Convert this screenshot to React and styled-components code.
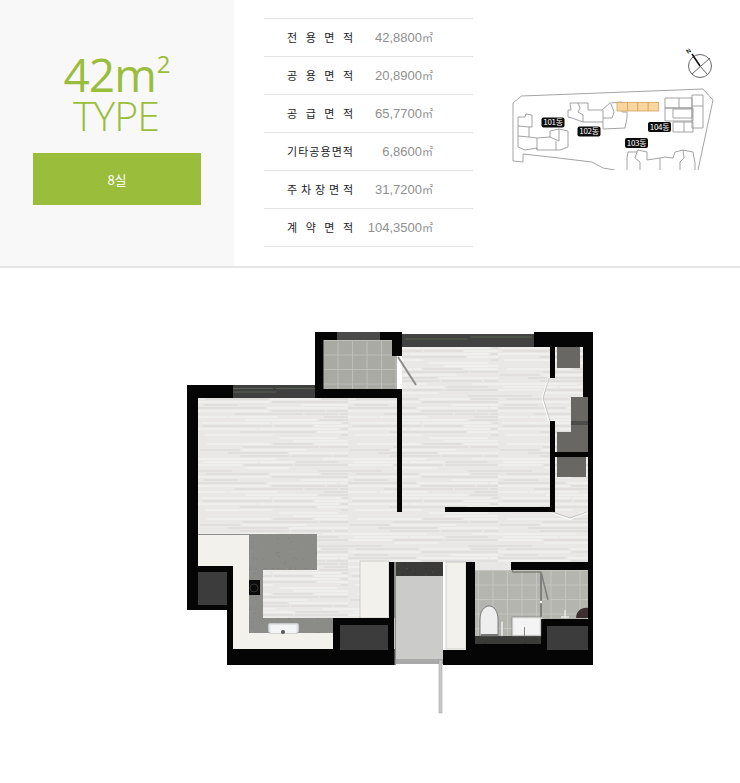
import styled, { createGlobalStyle } from 'styled-components'

const Global = createGlobalStyle`
    body{
        margin: 0;
        background: #fff;
        font-family: "Noto Sans CJK KR", "Noto Sans", sans-serif;
    }
`

const Page = styled.div`
    width: 740px;
    height: 783px;
    overflow: hidden;
`
const Header = styled.header`
    display: flex;
    height: 266px;
    border-bottom: 2px solid #e5e5e5;
`
const TypePanel = styled.div`
    width: 234px;
    box-sizing: border-box;
    padding-top: 52px;
    background-color: #f8f8f8;
    display: flex;
    flex-direction: column;
    align-items: center;
    color: #9bbd3c;
    font-family: "Open Sans", sans-serif;
`
const Size = styled.h1`
    margin: 0 0 0 -1px;
    font-size: 46px;
    line-height: 44px;
    font-weight: 400;
    letter-spacing: -1px;
    sup{
        font-size: 24px;
        font-weight: 500;
        line-height: 0;
        margin-left: 1px;
        vertical-align: 19px;
    }
`
const TypeName = styled.p`
    margin: -1px 0 0 -2px;
    font-size: 41px;
    line-height: 40px;
    font-weight: 300;
    letter-spacing: -1px;
`
const RoomBadge = styled.div`
    width: 168px;
    height: 52px;
    margin: 18px 0 0;
    background-color: #9bbd3c;
    color: #fff;
    font-family: "Noto Sans CJK KR", sans-serif;
    font-size: 13px;
    display: flex;
    align-items: center;
    justify-content: center;
`
const SpecTable = styled.div`
    width: 209px;
    margin: 18px 0 0 30px;
    align-self: flex-start;
    border-top: 1px solid #e3e3e3;
`
const SpecRow = styled.div`
    height: 37px;
    box-sizing: content-box;
    border-bottom: 1px solid #e3e3e3;
    display: flex;
    align-items: center;
    padding-left: 23px;
`
const SpecLabel = styled.div`
    width: 66px;
    padding-bottom: 2px;
    display: flex;
    justify-content: space-between;
    color: #222;
    font-size: 11px;
    line-height: 14px;
`
const SpecValue = styled.div`
    width: 80px;
    text-align: right;
    color: #8f8f8f;
    font-family: "Liberation Sans", sans-serif;
    font-size: 13px;
    line-height: 14px;
    white-space: nowrap;
    span{
        font-family: "Noto Sans CJK KR", sans-serif;
        font-size: 11px;
    }
`
const SiteMap = styled.svg`
    display: block;
    width: 210px;
    height: 125px;
    margin: 45px 0 0 37px;
    flex: none;
`
const PlanArea = styled.main`
    padding: 57px 0 63px 180px;
`
const Plan = styled.svg`
    display: block;
    width: 420px;
    height: 395px;
`

const specs = [
    ['전용면적', '42,8800'],
    ['공용면적', '20,8900'],
    ['공급면적', '65,7700'],
    ['기타공용면적', '6,8600'],
    ['주차장면적', '31,7200'],
    ['계약면적', '104,3500'],
]

const tags = [
    ['101동', 541.5, 117.5],
    ['102동', 577.5, 126.5],
    ['104동', 648, 122],
    ['103동', 625, 138],
]

// 바닥 무늬 - 가로 줄무늬를 고정 시드로 뽑는다
let seed = 42
const rand = () => {
    seed = (seed * 1103 + 12345) % 65536
    return seed / 65536
}
const strips = []
for (let y = 0; y < 75; y += 3) {
    let x = -10 + rand() * 20
    while (x < 150) {
        const w = 30 + rand() * 50
        const kind = rand()
        strips.push({
            x,
            y,
            w,
            fill: kind < 0.35 ? '#e0dfde' : kind < 0.7 ? '#efefee' : '#e9e8e7',
        })
        x += w + 2
    }
}

const specks = []
for (let i = 0; i < 30; i++) {
    specks.push({ x: rand() * 40, y: rand() * 40, dark: rand() > 0.5 })
}

const walls = [
    [187, 385, 46, 13],
    [187, 385, 11, 225],
    [315, 332, 22, 8],
    [315, 332, 8.5, 66],
    [315, 389, 87, 9],
    [380, 332, 22, 8],
    [392, 332, 10, 24],
    [397, 389, 5, 123],
    [534, 332, 59, 15],
    [583, 332, 10, 65],
    [588, 397, 5, 268],
    [550, 347, 5, 31],
    [550, 421, 5, 91],
    [445, 507, 110, 5],
    [555, 452, 33, 5],
    [187, 566, 46, 44],
    [227, 600, 6, 65],
    [227, 649, 168, 16],
    [333, 618, 61, 47],
    [389, 562, 5.5, 56],
    [443, 650, 150, 15],
    [466, 562, 9, 90],
    [511, 562, 82, 8],
    [541, 619, 52, 46],
    [475, 644, 70, 7],
]

const cabinets = [
    [557, 347, 23, 21],
    [571, 397, 17, 35],
    [557, 432, 31, 20],
    [557, 457, 29, 20],
]
const closets = [
    [198, 572, 29, 33],
    [340, 625, 48, 25],
    [547, 626, 41, 24],
]
const counters = [
    [360, 561, 29, 57],
    [446, 562, 20, 87],
]

function SiteMapDrawing() {
    return (
        <SiteMap viewBox="510 45 210 125">
            <circle cx="700" cy="66" r="11.5" fill="none" stroke="#666" />
            <path d="M692 74 L710 58 M700 66 L707 74" stroke="#666" fill="none" />
            <path d="M692 54 L700 66" stroke="#111" strokeWidth="1.6" />
            <text x="688" y="54" fontSize="6" fontWeight="700" fill="#111" fontFamily="Liberation Sans" transform="rotate(-35 688 54)">N</text>

            <g fill="none" stroke="#999" strokeWidth="0.9">
                <path d="M521.5 96 L703 89 L713 100 L698 170 M521.5 96 L513 103 L513 161 L523 162 L523 154 L550 157 L592 162 L603 168 L615 170" />
                <path d="M518 117 L525 117 L526 114 L532 115 L532 127 L529 127 L529 137 L537 138 L550 137 L550 131 L559 129 L568 131 L568 147 L560 150 L537 150 L537 148 L525 150 L518 147 L518 137 Z" />
                <path d="M518 126 L529 127 M518 136 L529 137 M537 138 L537 150 M550 137 L559 141 L559 129 M556 141 L556 150" />
                <path d="M570 103 L588 103 L588 110 L602 110 L610 103 L622 102 L622 112 L627 112 L627 118 L625 128 L603 129 L603 122 L583 122 L572 118 L568 117 L568 110 L571 110 Z" />
                <path d="M578 103 L580 108 L578 112 L583 115 L583 122 M603 110 L603 122 M611 104 L614 112 L612 118 L603 118" />
                <path d="M665 98 H692 V108 H665 Z M679 98 V108 M665 108 H693 V121 H665 Z M673 109 H692 V118 H673 Z M673 122 H693 V132 H673 Z M684 122 V132 M692 95 H703 V128 H692 Z M692 106 H703" />
                <path d="M627 170 L627 158 L628 152 L637 152 L638 150 L647 152 L647 160 L660 158 L665 157 L673 158 L675 152 L683 150 L693 152 L695 163 L695 170" />
                <path d="M637 152 L635 158 L640 162 L640 170 M683 150 L684 158 L680 162 L680 170 M660 158 L660 170" />
            </g>

            <g fill="#f9d5a0" stroke="#d6a45c" strokeWidth="0.8">
                <rect x="617" y="102.5" width="10.4" height="8.5" />
                <rect x="627.4" y="102.5" width="10.4" height="8.5" />
                <rect x="637.8" y="102.5" width="10.4" height="8.5" />
                <rect x="648.2" y="102.5" width="10.4" height="8.5" />
            </g>

            {tags.map(([name, x, y]) => (
                <g key={name}>
                    <rect x={x} y={y} width="23" height="10" rx="2" fill="#0c0c0c" />
                    <text x={x + 11.5} y={y + 7.8} fontSize="8" fill="#fff" textAnchor="middle" letterSpacing="-0.3" fontFamily="Noto Sans CJK KR">{name}</text>
                </g>
            ))}
        </SiteMap>
    )
}

function PlanDrawing() {
    return (
        <Plan viewBox="180 325 420 395">
            <defs>
                <pattern id="wood" x="198" y="398" width="150" height="75" patternUnits="userSpaceOnUse">
                    <rect width="150" height="75" fill="#e9e8e7" />
                    {strips.map((s, i) => (
                        <rect key={i} x={s.x} y={s.y} width={s.w} height="2" fill={s.fill} />
                    ))}
                </pattern>
                <pattern id="tile" x="323" y="340" width="14.5" height="14.5" patternUnits="userSpaceOnUse">
                    <rect width="14.5" height="14.5" fill="#a9aaa4" />
                    <path d="M0 .5 H14.5 M.5 0 V14.5" stroke="#bfbfb9" strokeWidth="1" />
                </pattern>
                <pattern id="bathTile" x="478" y="570" width="14.5" height="14.5" patternUnits="userSpaceOnUse">
                    <rect width="14.5" height="14.5" fill="#b4b5ae" />
                    <path d="M0 .5 H14.5 M.5 0 V14.5" stroke="#c6c6c0" strokeWidth="1" />
                </pattern>
                <pattern id="granite" width="40" height="40" patternUnits="userSpaceOnUse">
                    <rect width="40" height="40" fill="#8b8c87" />
                    {specks.map((s, i) => (
                        <rect key={i} x={s.x} y={s.y} width="1" height="1" fill={s.dark ? '#777873' : '#9a9b96'} />
                    ))}
                </pattern>
                <pattern id="darkStone" width="40" height="40" patternUnits="userSpaceOnUse">
                    <rect width="40" height="40" fill="#3b3c3a" />
                    {specks.map((s, i) => (
                        <rect key={i} x={s.x} y={s.y} width="1" height="1" fill={s.dark ? '#2b2b2a' : '#555653'} />
                    ))}
                </pattern>
            </defs>

            {/* 바닥 */}
            <path d="M198 398 H402 V347 H588 V562 H198 Z" fill="url(#wood)" />
            <rect x="263" y="562" width="97" height="56" fill="url(#wood)" />
            <rect x="323" y="340" width="74" height="49" fill="url(#tile)" />
            <rect x="475" y="570" width="113" height="49" fill="url(#bathTile)" />
            <rect x="475" y="619" width="66" height="26" fill="url(#bathTile)" />
            <rect x="475" y="562" width="36" height="8" fill="#e8e7e6" />

            {/* 창 */}
            <rect x="233" y="385" width="82" height="13" fill="#3f3f3f" />
            <path d="M233 388.5 H273 M276 388.5 H315 M233 392 H276" stroke="#5b6358" strokeWidth="1" />
            <rect x="337" y="332" width="43" height="8" fill="#4a4a4a" />
            <rect x="402" y="334" width="132" height="13" fill="#424242" />
            <path d="M405 339 H467 M470 337 H532" stroke="#56634f" strokeWidth="1" />

            {/* 주방 */}
            <path d="M198 534 H249 V618 H333 V649 H233 V566 H198 Z" fill="#f3f1ec" />
            <path d="M198 534.5 H249" stroke="#8c8c8c" strokeWidth="1" />
            <path d="M249 534 H317 V570 H263 V618 H333 V633 H249 Z" fill="url(#granite)" />
            <rect x="249" y="580" width="11" height="15" fill="#0b0b0b" />
            <circle cx="254" cy="588" r="4" fill="none" stroke="#333" />
            <rect x="268" y="623" width="31" height="10" rx="2" fill="#dfe1e4" stroke="#8f9296" strokeWidth="0.6" />
            <rect x="270.500" y="625" width="26" height="8" fill="#f3f4f6" />
            <circle cx="283" cy="632" r="2" fill="#555" />

            {counters.map(([x, y, w, h]) => (
                <rect key={x} x={x} y={y} width={w} height={h} fill="#f3f1ec" stroke="#b5b5b0" strokeWidth="0.6" />
            ))}

            {/* 현관 */}
            <rect x="396" y="562" width="47" height="14" fill="url(#darkStone)" />
            <rect x="396" y="576" width="47" height="83" fill="#cbcbc9" />
            <rect x="396" y="659" width="47" height="5" fill="#a9a9a9" />
            <rect x="439" y="660" width="3" height="53" fill="#c9c9c9" stroke="#999" strokeWidth="0.5" />

            {/* 벽 */}
            {walls.map(([x, y, w, h], i) => (
                <rect key={i} x={x} y={y} width={w} height={h} fill="#050505" />
            ))}
            <rect x="394.500" y="562" width="1.500" height="103" fill="#8b8b8b" />
            <rect x="475" y="636" width="66" height="8" fill="url(#darkStone)" />

            {cabinets.map(([x, y, w, h]) => (
                <rect key={y} x={x} y={y} width={w} height={h} fill="#686764" />
            ))}
            <rect x="571" y="421" width="17" height="4" fill="#4c4c4a" />
            {closets.map(([x, y, w, h]) => (
                <rect key={x} x={x} y={y} width={w} height={h} fill="#3b3c3b" />
            ))}

            {/* 문 */}
            <path d="M398 357 L416 385" stroke="#8c8c8c" strokeWidth="2" />
            <path d="M549 377 L542 398 L549 421" fill="none" stroke="#fff" strokeWidth="1.200" />
            <path d="M549 378 L543 398 L550 421" fill="none" stroke="#9a9a9a" strokeWidth="0.5" />
            <path d="M552 513 L570 519 L587 513" fill="none" stroke="#fff" strokeWidth="1.200" />
            <path d="M552 512 L570 518 L587 512" fill="none" stroke="#999" strokeWidth="0.5" />
            <path d="M512 570 L513 572 H541 M541 572 L548 600" fill="none" stroke="#80807c" strokeWidth="1.500" />
            <rect x="540" y="572" width="2" height="47" fill="#80807c" />
            <circle cx="541" cy="602" r="1.200" fill="#fff" />
            <circle cx="541" cy="618" r="1.200" fill="#fff" />

            {/* 욕실 */}
            <path d="M480 636 V620 C480 610 485 606 489 606 C494 606 498 611 498 620 V636 Z" fill="#eeeeee" stroke="#666" strokeWidth="0.8" />
            <rect x="481" y="634" width="17" height="2" fill="#777" />
            <rect x="500.500" y="621" width="3" height="15" fill="#e2e2e0" stroke="#888" strokeWidth="0.4" />
            <rect x="512" y="617" width="29" height="19" fill="#ececec" stroke="#777" strokeWidth="0.6" />
            <rect x="514" y="619" width="25" height="15" fill="#f4f4f4" />
            <rect x="524" y="627" width="1" height="9" fill="#888" />
            <path d="M565 610 V618 M561 617 H569" stroke="#e6e6e6" strokeWidth="1.500" />
            <path d="M576 618 C576 611 582 607 588 608 V618 Z" fill="#3c2f2f" />
        </Plan>
    )
}

const App = () => {
    return (
        <Page>
            <Global />
            <Header>
                <TypePanel>
                    <Size>42m<sup>2</sup></Size>
                    <TypeName>TYPE</TypeName>
                    <RoomBadge>8실</RoomBadge>
                </TypePanel>
                <SpecTable>
                    {specs.map(([name, value]) => (
                        <SpecRow key={name}>
                            <SpecLabel>
                                {name.split('').map((ch, i) => <span key={i}>{ch}</span>)}
                            </SpecLabel>
                            <SpecValue>{value}<span>㎡</span></SpecValue>
                        </SpecRow>
                    ))}
                </SpecTable>
                <SiteMapDrawing />
            </Header>
            <PlanArea>
                <PlanDrawing />
            </PlanArea>
        </Page>
    )
}

export default App
